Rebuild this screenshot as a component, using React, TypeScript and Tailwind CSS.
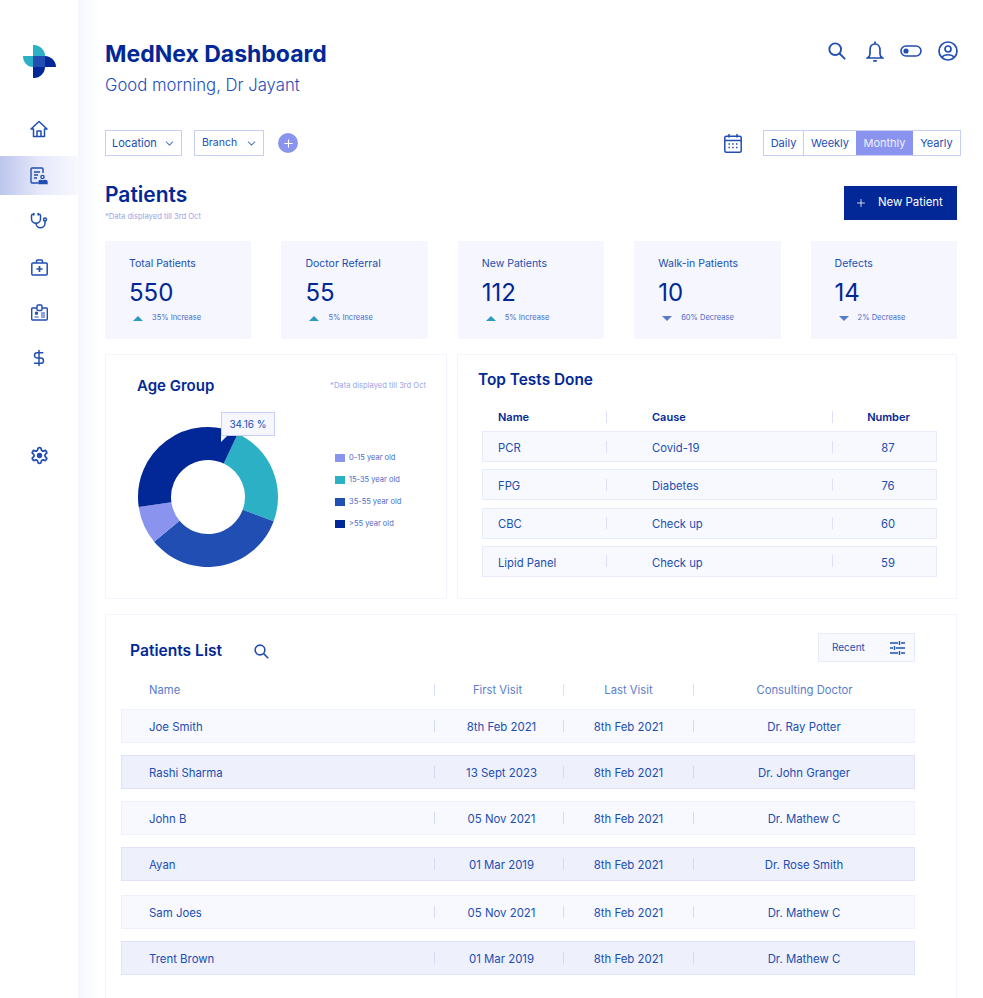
import { Plus, ChevronDown, DollarSign, Stethoscope } from "lucide-react";

const stats = [
  { title: "Total Patients", value: "550", note: "35% Increase", up: true },
  { title: "Doctor Referral", value: "55", note: "5% Increase", up: true },
  { title: "New Patients", value: "112", note: "5% Increase", up: true },
  { title: "Walk-in Patients", value: "10", note: "60% Decrease", up: false },
  { title: "Defects", value: "14", note: "2% Decrease", up: false },
];

const tests = [
  { name: "PCR", cause: "Covid-19", number: "87" },
  { name: "FPG", cause: "Diabetes", number: "76" },
  { name: "CBC", cause: "Check up", number: "60" },
  { name: "Lipid Panel", cause: "Check up", number: "59" },
];

const patients = [
  { name: "Joe Smith", first: "8th Feb 2021", doctor: "Dr. Ray Potter" },
  { name: "Rashi Sharma", first: "13 Sept 2023", doctor: "Dr. John Granger" },
  { name: "John B", first: "05 Nov 2021", doctor: "Dr. Mathew C" },
  { name: "Ayan", first: "01 Mar 2019", doctor: "Dr. Rose Smith" },
  { name: "Sam Joes", first: "05 Nov 2021", doctor: "Dr. Mathew C" },
  { name: "Trent Brown", first: "01 Mar 2019", doctor: "Dr. Mathew C" },
];

const legend = [
  { label: "0-15 year old", color: "bg-[#8a94ee]" },
  { label: "15-35 year old", color: "bg-[#2cb0c6]" },
  { label: "35-55 year old", color: "bg-[#204eb2]" },
  { label: ">55 year old", color: "bg-[#012896]" },
];

// angle is clockwise from the top of the donut
function arc(start: number, end: number) {
  const point = (r: number, a: number) => {
    const rad = ((a - 90) * Math.PI) / 180;
    return `${71 + r * Math.cos(rad)} ${71 + r * Math.sin(rad)}`;
  };
  const large = end - start > 180 ? 1 : 0;
  return `M ${point(70, start)} A 70 70 0 ${large} 1 ${point(70, end)} L ${point(37, end)} A 37 37 0 ${large} 0 ${point(37, start)} Z`;
}

function Logo() {
  return (
    <svg width="33" height="33" viewBox="0 0 33 33" aria-hidden>
      <path d="M10 0 H11 C17 0 22 5 22 11 H10 Z" fill="#2cb0c6" />
      <path d="M0 11 H10 V22 C4 22 0 17 0 11 Z" fill="#2cb0c6" />
      <path d="M22 11 C28 11 33 16 33 22 H22 Z" fill="#012896" />
      <path d="M10 22 H22 C22 28 17 33 11 33 H10 Z" fill="#012896" />
      <rect x="10" y="11" width="12" height="11" fill="#204eb2" />
    </svg>
  );
}

function HomeIcon() {
  return (
    <svg width="18" height="18" viewBox="0 0 18 18" fill="none" stroke="#204eb2" strokeWidth="1.5" strokeLinejoin="round" aria-hidden>
      <path d="M1 9 L9 1.5 L17 9 H14.5 V16.5 H3.5 V9 Z" />
      <path d="M7 16.5 V11 H11 V16.5" />
    </svg>
  );
}

function PatientsIcon() {
  return (
    <svg width="18" height="18" viewBox="0 0 18 18" fill="none" stroke="#204eb2" strokeWidth="1.4" aria-hidden>
      <path d="M8 16 H2 C1.4 16 1 15.6 1 15 V2 C1 1.4 1.4 1 2 1 H12 C12.6 1 13 1.4 13 2 V6" />
      <path d="M4 5 H10 M4 8 H8 M4 11 H7" />
      <circle cx="12.5" cy="10" r="1.6" />
      <path d="M9 16.5 V15 C9 14 10 13.5 11 13.5 C12 13.5 12.5 14 12.5 15 V16.5 Z M13 16.5 V15 C13 14 14 13.5 15 13.5 C16 13.5 17 14 17 15 V16.5 Z" fill="#204eb2" />
    </svg>
  );
}

function KitIcon() {
  return (
    <svg width="17" height="17" viewBox="0 0 17 17" fill="none" stroke="#204eb2" strokeWidth="1.5" aria-hidden>
      <rect x=".8" y="4" width="15.4" height="12" rx="1" />
      <path d="M5.5 4 V2 C5.5 1.4 5.9 1 6.5 1 H10.5 C11.1 1 11.5 1.4 11.5 2 V4" />
      <path d="M8.5 7 V13 M5.5 10 H11.5" strokeWidth="1.7" />
    </svg>
  );
}

function BadgeIcon() {
  return (
    <svg width="17" height="17" viewBox="0 0 17 17" fill="none" stroke="#204eb2" strokeWidth="1.4" aria-hidden>
      <path d="M6 4 H1.5 C1 4 .7 4.4 .7 4.8 V15 C.7 15.6 1 16 1.6 16 H15.4 C16 16 16.3 15.6 16.3 15 V4.8 C16.3 4.4 16 4 15.5 4 H11" />
      <rect x="6" y="1" width="5" height="5.5" rx="1" />
      <circle cx="5.5" cy="9.2" r="1" />
      <path d="M3.5 13 H7.5 M10 9 H14 M10 11 H14 M10 13 H14" strokeWidth="1" />
    </svg>
  );
}

function GearIcon() {
  return (
    <svg width="19" height="19" viewBox="0 0 24 24" fill="none" stroke="#204eb2" strokeWidth="2.2" aria-hidden>
      <path d="M12.22 2h-.44a2 2 0 0 0-2 2v.18a2 2 0 0 1-1 1.73l-.43.25a2 2 0 0 1-2 0l-.15-.08a2 2 0 0 0-2.73.73l-.22.38a2 2 0 0 0 .73 2.73l.15.1a2 2 0 0 1 1 1.72v.51a2 2 0 0 1-1 1.74l-.15.09a2 2 0 0 0-.73 2.73l.22.38a2 2 0 0 0 2.73.73l.15-.08a2 2 0 0 1 2 0l.43.25a2 2 0 0 1 1 1.73V20a2 2 0 0 0 2 2h.44a2 2 0 0 0 2-2v-.18a2 2 0 0 1 1-1.73l.43-.25a2 2 0 0 1 2 0l.15.08a2 2 0 0 0 2.73-.73l.22-.39a2 2 0 0 0-.73-2.73l-.15-.08a2 2 0 0 1-1-1.74v-.5a2 2 0 0 1 1-1.74l.15-.09a2 2 0 0 0 .73-2.73l-.22-.38a2 2 0 0 0-2.73-.73l-.15.08a2 2 0 0 1-2 0l-.43-.25a2 2 0 0 1-1-1.73V4a2 2 0 0 0-2-2z" />
      <circle cx="12" cy="12" r="3.4" fill="#204eb2" stroke="none" />
    </svg>
  );
}

function SearchIcon({ size }: { size: number }) {
  return (
    <svg width={size} height={size} viewBox="0 0 20 20" fill="none" stroke="#204eb2" strokeWidth="2.1" aria-hidden>
      <circle cx="8" cy="8" r="6.5" />
      <path d="M12.8 12.8 L19 19" />
    </svg>
  );
}

function BellIcon() {
  return (
    <svg width="18" height="21" viewBox="0 0 18 21" fill="none" stroke="#204eb2" strokeWidth="1.7" aria-hidden>
      <path d="M9 3 C5.5 3 4 6 4 9 V13 C4 15 3 16 1.5 17 H16.5 C15 16 14 15 14 13 V9 C14 6 12.5 3 9 3 Z" />
      <path d="M9 .5 V3 M7.2 19.8 H10.8" />
    </svg>
  );
}

function CalendarIcon() {
  return (
    <svg width="18" height="19" viewBox="0 0 18 19" fill="none" stroke="#204eb2" strokeWidth="1.5" aria-hidden>
      <rect x=".8" y="2.2" width="16.4" height="16" rx="1.5" />
      <path d="M.8 6.5 H17.2 M5 0 V3.5 M13 0 V3.5" />
      <path d="M4.5 10 H6 M8.2 10 H9.7 M12 10 H13.5 M4.5 13.5 H6 M8.2 13.5 H9.7 M12 13.5 H13.5" strokeWidth="1.4" />
    </svg>
  );
}

function TuneIcon() {
  return (
    <svg width="15" height="14" viewBox="0 0 15 14" fill="none" stroke="#204eb2" strokeWidth="1.4" aria-hidden>
      <path d="M0 2 H8 M11 2 H15 M9.5 0 V4" />
      <path d="M0 7 H3 M6 7 H15 M4.5 5 V9" />
      <path d="M0 12 H8 M11 12 H15 M9.5 10 V14" />
    </svg>
  );
}

function StatCard({ title, value, note, up }: (typeof stats)[number]) {
  return (
    <div className="h-[98px] bg-[#f5f6fe] pl-6 pt-4">
      <p className="text-[10.5px] leading-[13px] text-[#204eb2]">{title}</p>
      <p className="mt-2 text-[24px] leading-[30px] text-[#012896]">{value}</p>
      <div className="mt-[3px] flex items-center pl-1">
        {up ? (
          <span className="h-0 w-0 border-x-[5px] border-b-[5px] border-x-transparent border-b-[#2a9cc0]" />
        ) : (
          <span className="h-0 w-0 border-x-[5px] border-t-[5px] border-x-transparent border-t-[#5b7ccc]" />
        )}
        <span className="ml-[9px] text-[7.5px] leading-[14px] text-[#4c6ac4]">{note}</span>
      </div>
    </div>
  );
}

export default function App() {
  return (
    <div className="flex h-[998px] overflow-hidden bg-white font-['Inter',sans-serif]">
      <aside className="flex w-[78px] shrink-0 flex-col items-center pt-[45px]">
        <Logo />
        <div className="mt-[41px] flex h-5 items-center"><HomeIcon /></div>
        <div className="mt-[17px] flex h-[39px] w-full items-center justify-center bg-gradient-to-r from-[#bcc5ec] via-[#e6e8fa] to-[#f8f8fe]"><PatientsIcon /></div>
        <div className="mt-4 flex h-5 items-center"><Stethoscope size={18} color="#204eb2" strokeWidth={2} /></div>
        <div className="mt-[26px] flex h-5 items-center"><KitIcon /></div>
        <div className="mt-[25px] flex h-5 items-center"><BadgeIcon /></div>
        <div className="mt-[26px] flex h-5 items-center"><DollarSign size={18} color="#204eb2" strokeWidth={2} /></div>
        <div className="mt-[77px] flex h-5 items-center"><GearIcon /></div>
      </aside>

      <main className="min-w-0 flex-1 bg-gradient-to-r from-[#f5f6fe] to-white to-[22px] pl-[27px] pr-[26px] pt-10">
        <header className="flex justify-between">
          <div>
            <h1 className="text-[23px] font-bold leading-[28px] text-[#012896]">MedNex Dashboard</h1>
            <p className="mt-[5px] text-[16.7px] font-light leading-[24px] text-[#1f4dbb]">Good morning, Dr Jayant</p>
          </div>
          <div className="-mr-px flex h-5 items-center gap-4 pt-[2px]">
            <div className="mr-[3px]"><SearchIcon size={18} /></div>
            <div className="ml-px"><BellIcon /></div>
            <svg width="22" height="12" viewBox="0 0 22 12" fill="none" aria-hidden>
              <rect x="1" y="1" width="20" height="10" rx="5" stroke="#204eb2" strokeWidth="1.6" />
              <circle cx="6" cy="6" r="2.6" fill="#204eb2" />
            </svg>
            <svg width="20" height="20" viewBox="0 0 20 20" fill="none" stroke="#204eb2" strokeWidth="1.7" aria-hidden>
              <circle cx="10" cy="10" r="9" />
              <circle cx="10" cy="8" r="3" />
              <path d="M4.5 16 C6 13 14 13 15.5 16" />
            </svg>
          </div>
        </header>

        <div className="mt-[33px] flex h-[26px] items-center">
          <div className="flex h-full w-[77px] items-center justify-between border border-[#c8cff5] pl-[6px] pr-[5px] text-[11px] text-[#204eb2]">
            Location <ChevronDown size={13} color="#5b7ccc" />
          </div>
          <div className="ml-3 flex h-full w-[70px] items-center justify-between border border-[#c8cff5] pl-[7px] pr-[5px] text-[10.5px] text-[#204eb2]">
            Branch <ChevronDown size={13} color="#5b7ccc" />
          </div>
          <div className="ml-[14px] flex size-5 items-center justify-center rounded-full bg-[#8a94ee]">
            <Plus size={13} color="white" strokeWidth={2} />
          </div>
          <div className="ml-auto mr-[21px] flex items-center"><CalendarIcon /></div>
          <div className="-mr-1 flex h-full border border-[#c8cff5] text-[11px] text-[#204eb2]">
            <div className="flex w-[40px] items-center justify-center border-r border-[#c8cff5]">Daily</div>
            <div className="flex w-[52px] items-center justify-center">Weekly</div>
            <div className="flex w-[57px] items-center justify-center bg-[#8a94ee] text-[#eef0ff]">Monthly</div>
            <div className="flex w-[47px] items-center justify-center">Yearly</div>
          </div>
        </div>

        <div className="mt-[26px] flex items-start justify-between">
          <div>
            <h2 className="text-[21px] font-semibold leading-[26px] text-[#012896]">Patients</h2>
            <p className="mt-1 text-[7.6px] leading-[9px] text-[#9aa5e8]">*Data displayed till 3rd Oct</p>
          </div>
          <button className="mt-1 flex h-[34px] w-[113px] items-center bg-[#012896] pl-[11px] text-[11.4px] text-white">
            <Plus size={12} color="white" className="mr-[11px]" strokeWidth={1.6} /> New Patient
          </button>
        </div>

        <div className="mt-5 grid grid-cols-5 gap-[30px]">
          {stats.map((s) => (
            <StatCard key={s.title} {...s} />
          ))}
        </div>

        <div className="mt-[15px] grid h-[245px] grid-cols-[342px_500px] gap-[10px]">
          <section className="border border-[#f3f4fd] pl-[31px] pr-5 pt-[21px]">
            <div className="flex items-center justify-between">
              <h3 className="text-[15px] font-semibold leading-5 text-[#012896]">Age Group</h3>
              <p className="text-[7.6px] text-[#9aa5e8]">*Data displayed till 3rd Oct</p>
            </div>
            <div className="mt-[30px] flex items-start">
              <div className="relative h-[142px] w-[142px] shrink-0">
                <svg width="142" height="142" viewBox="0 0 142 142" aria-hidden>
                  <path d={arc(25.2, 110.3)} fill="#2cb0c6" />
                  <path d={arc(110.3, 230.3)} fill="#204eb2" />
                  <path d={arc(230.3, 261.8)} fill="#8a94ee" />
                  <path d={arc(261.8, 385.2)} fill="#012896" />
                </svg>
                <div className="absolute left-[84px] top-[-14px] flex h-6 w-[54px] items-center justify-center border border-[#c8cff5] bg-[#f5f6fe] text-[10px] text-[#204eb2]">
                  34.16 %
                  <span className="absolute left-[-1px] top-[23px] h-0 w-0 border-r-[6px] border-t-[6px] border-r-transparent border-t-[#f5f6fe]" />
                </div>
              </div>
              <ul className="ml-[56px] mt-[25px] flex flex-col gap-[9px]">
                {legend.map((l) => (
                  <li key={l.label} className="flex h-[13px] items-center gap-[4px] text-[7.5px] text-[#4c6ac4]">
                    <span className={`h-2 w-[10px] ${l.color}`} />
                    {l.label}
                  </li>
                ))}
              </ul>
            </div>
          </section>

          <section className="border border-[#f3f4fd] pl-5 pr-[19px] pt-[15px]">
            <h3 className="text-[15.4px] font-semibold leading-5 text-[#012896]">Top Tests Done</h3>
            <div className="ml-1 mt-[17px] flex h-[20px] items-center text-[11px] font-semibold text-[#012896]">
              <div className="w-[124px] pl-4">Name</div>
              <div className="h-3 border-l border-[#dde1f8]" />
              <div className="w-[225px] pl-[45px]">Cause</div>
              <div className="h-3 border-l border-[#dde1f8]" />
              <div className="flex-1 pl-[7px] text-center">Number</div>
            </div>
            <div className="ml-1 mt-1 flex flex-col gap-[7.33px]">
              {tests.map((t) => (
                <div key={t.name} className="flex h-[31px] items-center border border-[#e8ebfb] bg-[#f8f9fe] text-[11.25px] text-[#204eb2]">
                  <div className="w-[123px] pl-[15px] pt-[3px]">{t.name}</div>
                  <div className="h-3 border-l border-[#dde1f8]" />
                  <div className="w-[225px] pl-[45px] pt-[3px]">{t.cause}</div>
                  <div className="h-3 border-l border-[#dde1f8]" />
                  <div className="flex-1 pl-[7px] pt-[3px] text-center">{t.number}</div>
                </div>
              ))}
            </div>
          </section>
        </div>

        <section className="mt-[15px] h-[500px] border border-[#f3f4fd] pl-[15px] pr-[41px] pt-[18px]">
          <div className="flex h-[29px] items-start justify-between">
            <div className="mt-[6px] flex items-center pl-[9px]">
              <h3 className="text-[15.6px] font-semibold leading-6 text-[#012896]">Patients List</h3>
              <div className="ml-8"><SearchIcon size={15} /></div>
            </div>
            <div className="flex h-full w-[97px] items-center justify-between border border-[#e8ebfb] bg-[#f8f9fe] pl-[13px] pr-[9px] text-[10px] text-[#204eb2]">
              Recent <TuneIcon />
            </div>
          </div>
          <div className="mt-[18px] flex h-5 items-center text-[11.25px] text-[#5b7ccc]">
            <div className="w-[313px] pl-7">Name</div>
            <div className="h-3 border-l border-[#dde1f8]" />
            <div className="w-[128px] pr-[3px] text-center">First Visit</div>
            <div className="h-3 border-l border-[#dde1f8]" />
            <div className="w-[129px] text-center">Last Visit</div>
            <div className="h-3 border-l border-[#dde1f8]" />
            <div className="flex-1 text-center">Consulting Doctor</div>
          </div>
          <div className="mt-[9px] flex flex-col gap-3">
            {patients.map((p, i) => (
              <div
                key={p.name}
                className={`flex h-[34px] items-center border text-[11.4px] text-[#204eb2] ${
                  i % 2 === 1 ? "border-[#dfe2f9] bg-[#eef0fc]" : "border-[#eef0fc] bg-[#f8f9fe]"
                } ${i === 4 ? "mt-0.5" : ""}`}
              >
                <div className="w-[312px] pl-[27px] pt-1">{p.name}</div>
                <div className="h-3 border-l border-[#d5daf5]" />
                <div className="w-[128px] pl-[5px] pt-1 text-center">{p.first}</div>
                <div className="h-3 border-l border-[#d5daf5]" />
                <div className="w-[129px] pt-1 text-center">8th Feb 2021</div>
                <div className="h-3 border-l border-[#d5daf5]" />
                <div className="flex-1 pt-1 text-center">{p.doctor}</div>
              </div>
            ))}
          </div>
        </section>
      </main>
    </div>
  );
}
